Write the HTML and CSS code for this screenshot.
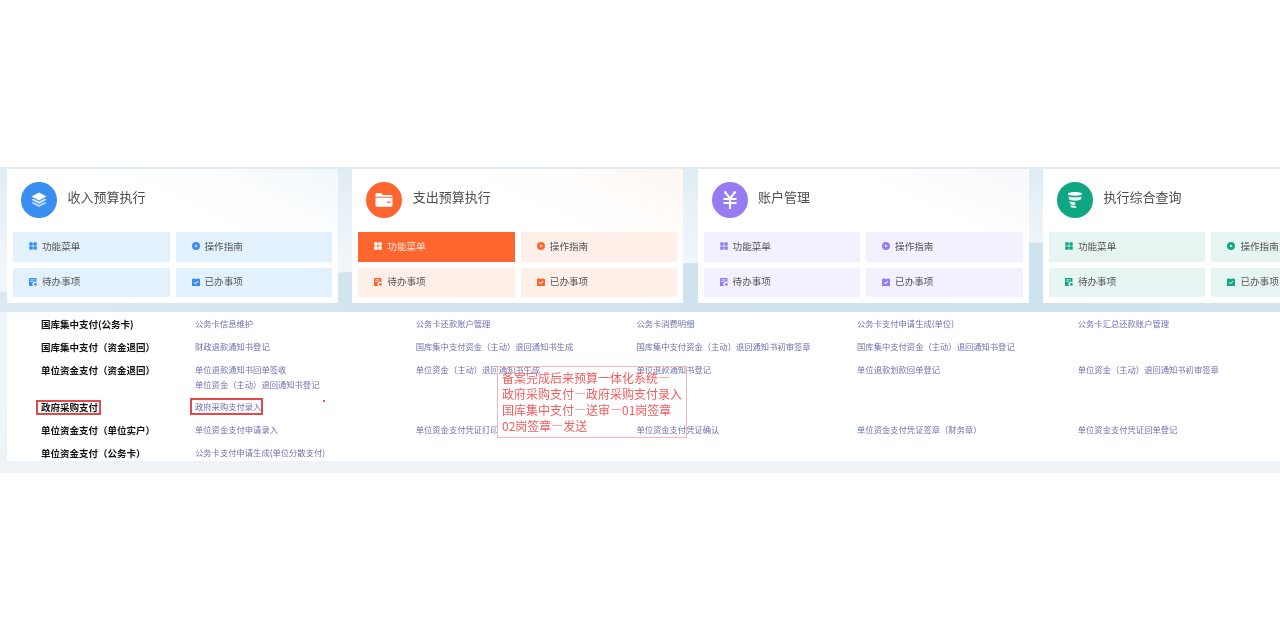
FILE: index.html
```html
<!DOCTYPE html>
<html lang="zh-CN">
<head>
<meta charset="utf-8">
<title>预算执行</title>
<link rel="stylesheet" href="styles.css">
</head>
<body>
<svg class="defs" width="0" height="0" aria-hidden="true">
  <symbol id="i-grid" viewBox="0 0 8 8"><rect x="0.2" y="0.2" width="3.5" height="3.5" rx="0.9"/><rect x="4.300" y="0.2" width="3.500" height="3.500" rx="0.9"/><rect x="0.2" y="4.300" width="3.500" height="3.500" rx="0.9"/><rect x="4.300" y="4.300" width="3.500" height="3.500" rx="0.9"/></symbol>
  <symbol id="i-play" viewBox="0 0 8 8"><path fill-rule="evenodd" d="M4 0a4 4 0 1 1 0 8a4 4 0 0 1 0-8zM3.100 2.400v3.200L5.700 4z"/></symbol>
  <symbol id="i-todo" viewBox="0 0 8 8"><path fill-rule="evenodd" d="M0 0h7.400v4.200A2.400 2.400 0 0 0 4.200 8H0zM1.200 1.400v.9h4.600v-.9zM1.200 3.200v.9h2.600v-.9z"/><circle cx="6.400" cy="6.400" r="1.400"/></symbol>
  <symbol id="i-done" viewBox="0 0 8 8"><path fill-rule="evenodd" d="M0 1h1.500V0h1v1h3V0h1v1H8v7H0zM1.800 4.600l1.700 1.700l2.900-2.900l-.6-.6l-2.300 2.300l-1.100-1.100z"/></symbol>
</svg>

<main class="band">
  <section class="cards">
    <article class="card card-blue">
      <header class="card-head">
        <span class="badge">
          <svg class="badge-icon" viewBox="0 0 20 20"><path d="M10 2.500l7.500 4-7.500 4-7.500-4z" fill="#fff"/><path d="M4.300 8.800l5.700 3 5.700-3 1.800 1-7.500 4-7.500-4z" fill="#fff" opacity=".85"/><path d="M4.300 12l5.700 3 5.700-3 1.800 1-7.500 4-7.500-4z" fill="#fff" opacity=".7"/></svg>
        </span>
        <h2 class="card-title">收入预算执行</h2>
      </header>
      <div class="actions">
        <a class="action"><svg class="mini"><use href="#i-grid"/></svg>功能菜单</a>
        <a class="action"><svg class="mini"><use href="#i-play"/></svg>操作指南</a>
        <a class="action"><svg class="mini"><use href="#i-todo"/></svg>待办事项</a>
        <a class="action"><svg class="mini"><use href="#i-done"/></svg>已办事项</a>
      </div>
    </article>

    <article class="card card-orange">
      <header class="card-head">
        <span class="badge">
          <svg class="badge-icon" viewBox="0 0 20 20"><path d="M1.500 4.200q0-1.200 1.200-1.200h4.300l1.800 2h8.500q1.200 0 1.200 1.200v.6H1.500z" fill="#fff"/><path fill-rule="evenodd" d="M1.500 7.800h17v7.500q0 1.500-1.500 1.500H3q-1.500 0-1.500-1.500zM13 11.500v1.300h3.500v-1.300z" fill="#fff"/></svg>
        </span>
        <h2 class="card-title">支出预算执行</h2>
      </header>
      <div class="actions">
        <a class="action action-on"><svg class="mini"><use href="#i-grid"/></svg>功能菜单</a>
        <a class="action"><svg class="mini"><use href="#i-play"/></svg>操作指南</a>
        <a class="action"><svg class="mini"><use href="#i-todo"/></svg>待办事项</a>
        <a class="action"><svg class="mini"><use href="#i-done"/></svg>已办事项</a>
      </div>
    </article>

    <article class="card card-purple">
      <header class="card-head">
        <span class="badge">
          <svg class="badge-icon" viewBox="0 0 20 20"><path d="M4.500 1.500L10 8.500l5.500-7M3.500 9h13M3.500 13h13M10 8.500V19" fill="none" stroke="#fff" stroke-width="2.100"/></svg>
        </span>
        <h2 class="card-title">账户管理</h2>
      </header>
      <div class="actions">
        <a class="action"><svg class="mini"><use href="#i-grid"/></svg>功能菜单</a>
        <a class="action"><svg class="mini"><use href="#i-play"/></svg>操作指南</a>
        <a class="action"><svg class="mini"><use href="#i-todo"/></svg>待办事项</a>
        <a class="action"><svg class="mini"><use href="#i-done"/></svg>已办事项</a>
      </div>
    </article>

    <article class="card card-green">
      <header class="card-head">
        <span class="badge">
          <svg class="badge-icon" viewBox="0 0 20 20"><path d="M3 3q7-1.800 14 0v1.800q-7 2-14 0z" fill="#fff"/><path d="M3.500 6.500q6.500 1.700 13 0l-.6 3q-3 1.200-5.900 1.200q-3 0-5.900-1.200z" fill="#fff" opacity=".9"/><path d="M4.500 11.200q2.500 1 5.800 1l-.2 2.800q-2.800 0-5-1z" fill="#fff" opacity=".9"/><path d="M5.500 15q2.500.9 5 .8l1.300 1.800q-3.500 1-6-.3z" fill="#fff" opacity=".85"/></svg>
        </span>
        <h2 class="card-title">执行综合查询</h2>
      </header>
      <div class="actions">
        <a class="action"><svg class="mini"><use href="#i-grid"/></svg>功能菜单</a>
        <a class="action"><svg class="mini"><use href="#i-play"/></svg>操作指南</a>
        <a class="action"><svg class="mini"><use href="#i-todo"/></svg>待办事项</a>
        <a class="action"><svg class="mini"><use href="#i-done"/></svg>已办事项</a>
      </div>
    </article>
  </section>

  <section class="menu">
    <div class="row">
      <h3 class="group">国库集中支付(公务卡)</h3>
      <div class="links">
        <a class="link">公务卡信息维护</a><a class="link">公务卡还款账户管理</a><a class="link">公务卡消费明细</a><a class="link">公务卡支付申请生成(单位)</a><a class="link">公务卡汇总还款账户管理</a>
      </div>
    </div>
    <div class="row">
      <h3 class="group">国库集中支付（资金退回）</h3>
      <div class="links">
        <a class="link">财政退款通知书登记</a><a class="link">国库集中支付资金（主动）退回通知书生成</a><a class="link">国库集中支付资金（主动）退回通知书初审签章</a><a class="link">国库集中支付资金（主动）退回通知书登记</a>
      </div>
    </div>
    <div class="row">
      <h3 class="group">单位资金支付（资金退回）</h3>
      <div class="links">
        <a class="link">单位退款通知书回单签收</a><a class="link">单位资金（主动）退回通知书生成</a><a class="link">单位退款通知书登记</a><a class="link">单位退款划款回单登记</a><a class="link">单位资金（主动）退回通知书初审签章</a>
        <a class="link">单位资金（主动）退回通知书登记</a>
      </div>
    </div>
    <div class="row">
      <h3 class="group"><span class="mark mark-group">政府采购支付</span></h3>
      <div class="links">
        <a class="link"><span class="mark mark-link">政府采购支付录入</span></a>
      </div>
    </div>
    <div class="row">
      <h3 class="group">单位资金支付（单位实户）</h3>
      <div class="links">
        <a class="link">单位资金支付申请录入</a><a class="link">单位资金支付凭证打印</a><a class="link">单位资金支付凭证确认</a><a class="link">单位资金支付凭证签章（财务章）</a><a class="link">单位资金支付凭证回单登记</a>
      </div>
    </div>
    <div class="row">
      <h3 class="group">单位资金支付（公务卡）</h3>
      <div class="links">
        <a class="link">公务卡支付申请生成(单位分散支付)</a>
      </div>
    </div>
  </section>

  <span class="dot"></span>
  <aside class="note">备案完成后来预算一体化系统—<br>政府采购支付—政府采购支付录入<br>国库集中支付—送审—01岗签章<br>02岗签章—发送</aside>
</main>
</body>
</html>
```

FILE: styles.css
```css
* { box-sizing: border-box; }

html, body { margin: 0; padding: 0; background: #fff; overflow: hidden; }

body {
  font-family: "Noto Sans CJK SC", "Liberation Sans", sans-serif;
  height: 639px;
  padding-top: 167px;
}

.defs { position: absolute; }

.band {
  position: relative;
  height: 306px;
  overflow: hidden;
  padding-top: 2px;
  background: linear-gradient(180deg, #dfecf3 0, #e8f1f7 40px, #f1f6fa 100px, #edf3f7 100%);
  filter: blur(0.5px);
}

.band::before {
  content: "";
  position: absolute;
  left: 0;
  right: 0;
  top: 60px;
  height: 85px;
  background: linear-gradient(90deg, #dbe9f2 0, #d2e4ef 30%, #cde2ed 80%, #d2e5ef 100%);
  clip-path: polygon(0 65px, 180px 66px, 345px 45px, 520px 40px, 700px 36px, 1030px 16px, 1160px 10px, 1280px 13px, 1280px 85px, 0 85px);
}

.cards {
  position: relative;
  display: flex;
  gap: 14.300px;
  padding-left: 7px;
  height: 134px;
}

.card {
  flex: 0 0 331px;
  height: 134px;
  padding: 13px 6px 6px;
  background: #fff;
}

.card-blue { background: linear-gradient(205deg, #f1f7fb 0, #fbfdfe 22%, #fff 40%); }
.card-orange { background: linear-gradient(205deg, #fdf6f1 0, #fffcfa 20%, #fff 38%); }
.card-purple { background: linear-gradient(205deg, #f8f8fd 0, #fff 30%); }

.card-blue { --main: #3a8ef0; --soft: #e3f1fc; }
.card-orange { --main: #ff652f; --soft: #feefe9; }
.card-purple { --main: #967cf0; --soft: #f3f1fd; }
.card-green { --main: #0fa783; --soft: #e6f5f1; }

.card-head {
  display: flex;
  align-items: center;
  gap: 10.500px;
  height: 36px;
  padding-left: 8px;
  margin-bottom: 14px;
}

.badge {
  flex: none;
  display: flex;
  align-items: center;
  justify-content: center;
  width: 36px;
  height: 36px;
  border-radius: 50%;
  background: var(--main);
}

.badge-icon { width: 20px; height: 20px; display: block; }

.card-title {
  margin: 0 0 7px;
  font-size: 13px;
  font-weight: 400;
  line-height: 18px;
  color: #4f4f4f;
}

.actions {
  display: grid;
  grid-template-columns: 156.500px 156.500px;
  grid-auto-rows: 29.500px;
  gap: 6px;
}

.action {
  display: flex;
  align-items: center;
  gap: 5px;
  padding: 0 0 2px 16px;
  font-size: 9.600px;
  line-height: 14px;
  color: #555;
  background: var(--soft);
}

.mini {
  flex: none;
  width: 8px;
  height: 8px;
  margin-top: 1px;
  fill: var(--main);
}

.action-on {
  color: #ffe6da;
  background: var(--main);
}

.action-on .mini { fill: #fff; }

.menu {
  position: relative;
  margin: 9px 0 0 7px;
  height: 149px;
  padding-top: 3px;
  background: #fff;
  overflow: hidden;
}

.row {
  display: flex;
  min-height: 23px;
}

.row:nth-child(3) { min-height: 37px; }

.group {
  flex: 0 0 188px;
  margin: 0;
  padding-left: 34px;
  font-size: 9.500px;
  font-weight: 700;
  line-height: 19px;
  color: #111;
  white-space: nowrap;
}

.links {
  display: grid;
  grid-template-columns: repeat(5, 220.700px);
  grid-auto-rows: 15px;
  flex: none;
  padding-top: 1px;
}

.link {
  font-size: 8.300px;
  line-height: 15px;
  color: #6f70b3;
  white-space: nowrap;
}

.mark {
  display: inline-block;
  border: 2px solid #e8474a;
  vertical-align: top;
}

.mark-group {
  margin: 2px -3px 0 -5px;
  padding: 0 1px 0 3px;
  line-height: 11px;
}

.mark-link {
  margin: -1px -2px -1px -5px;
  padding: 0 0 0 3px;
  line-height: 13px;
}

.dot {
  position: absolute;
  left: 323px;
  top: 233px;
  width: 2px;
  height: 2px;
  background: #f2545b;
}

.note {
  position: absolute;
  left: 497px;
  top: 199px;
  width: 190px;
  height: 72px;
  padding: 3px 0 0 4px;
  border: 1px solid #fbb5b5;
  font-size: 12px;
  line-height: 16.100px;
  color: #f65a5c;
  white-space: nowrap;
}
```
